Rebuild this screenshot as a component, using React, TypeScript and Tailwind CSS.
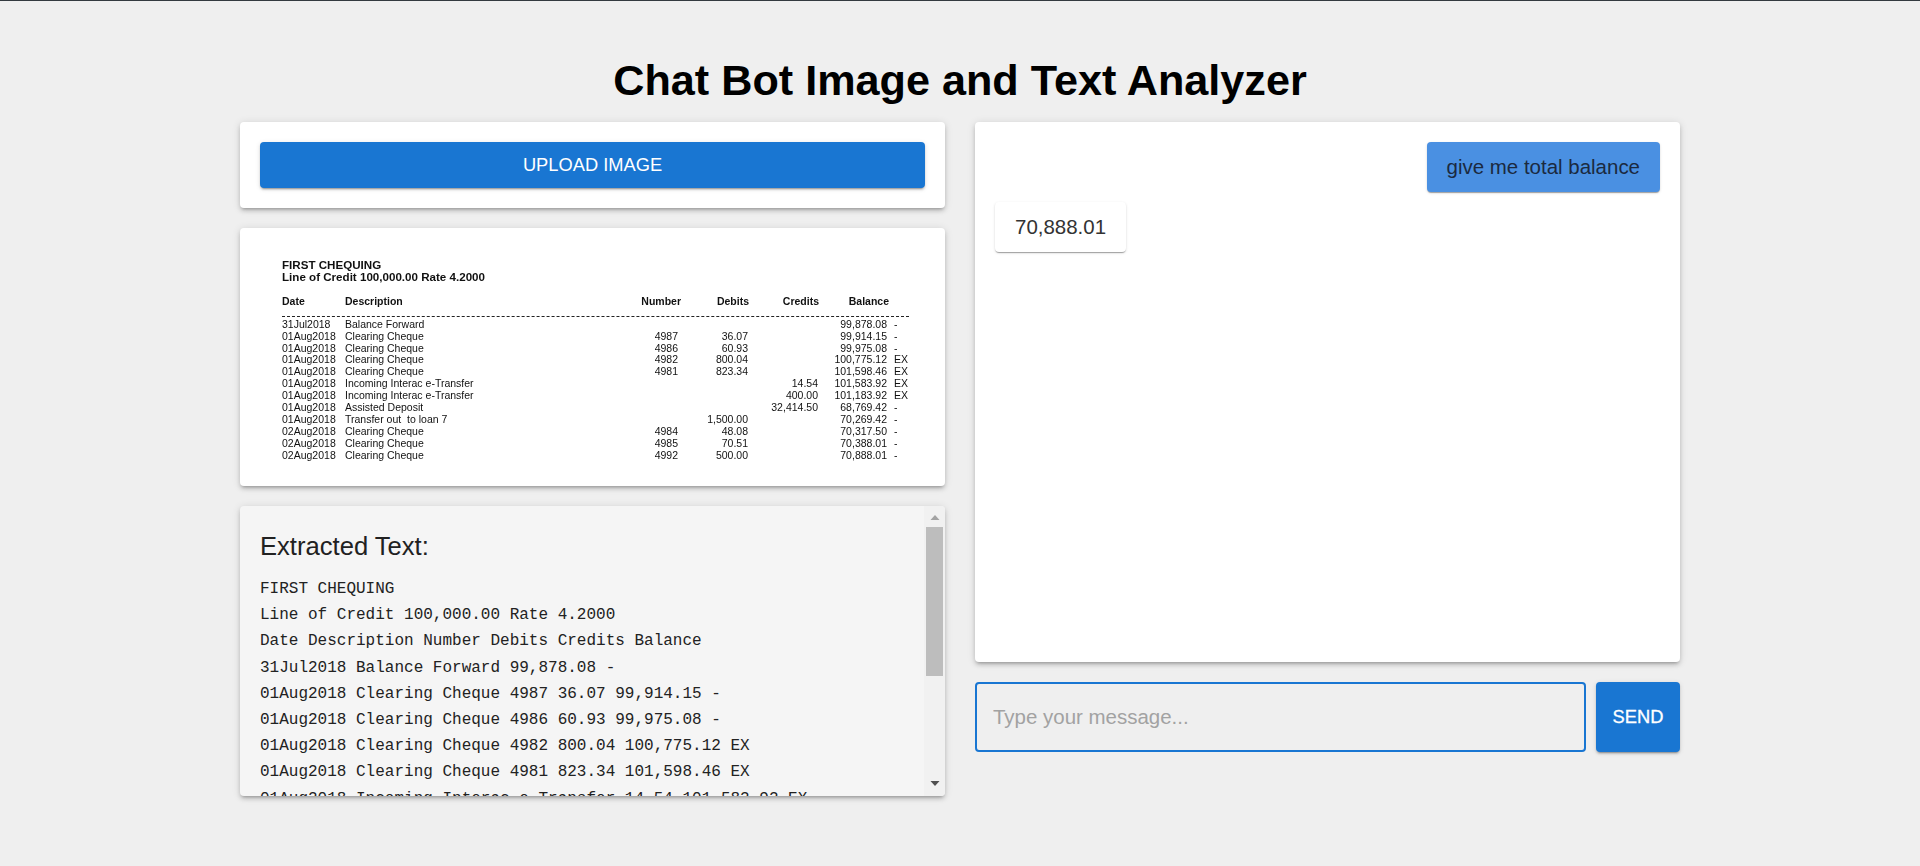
const statementRows = [
  ["31Jul2018", "Balance Forward", "", "", "", "99,878.08", "-"],
  ["01Aug2018", "Clearing Cheque", "4987", "36.07", "", "99,914.15", "-"],
  ["01Aug2018", "Clearing Cheque", "4986", "60.93", "", "99,975.08", "-"],
  ["01Aug2018", "Clearing Cheque", "4982", "800.04", "", "100,775.12", "EX"],
  ["01Aug2018", "Clearing Cheque", "4981", "823.34", "", "101,598.46", "EX"],
  ["01Aug2018", "Incoming Interac e-Transfer", "", "", "14.54", "101,583.92", "EX"],
  ["01Aug2018", "Incoming Interac e-Transfer", "", "", "400.00", "101,183.92", "EX"],
  ["01Aug2018", "Assisted Deposit", "", "", "32,414.50", "68,769.42", "-"],
  ["01Aug2018", "Transfer out  to loan 7", "", "1,500.00", "", "70,269.42", "-"],
  ["02Aug2018", "Clearing Cheque", "4984", "48.08", "", "70,317.50", "-"],
  ["02Aug2018", "Clearing Cheque", "4985", "70.51", "", "70,388.01", "-"],
  ["02Aug2018", "Clearing Cheque", "4992", "500.00", "", "70,888.01", "-"],
];

const extractedLines = [
  "FIRST CHEQUING",
  "Line of Credit 100,000.00 Rate 4.2000",
  "Date Description Number Debits Credits Balance",
  "31Jul2018 Balance Forward 99,878.08 -",
  "01Aug2018 Clearing Cheque 4987 36.07 99,914.15 -",
  "01Aug2018 Clearing Cheque 4986 60.93 99,975.08 -",
  "01Aug2018 Clearing Cheque 4982 800.04 100,775.12 EX",
  "01Aug2018 Clearing Cheque 4981 823.34 101,598.46 EX",
  "01Aug2018 Incoming Interac e-Transfer 14.54 101,583.92 EX",
];

const cardShadow =
  "shadow-[0px_3px_3px_-2px_rgba(0,0,0,0.2),0px_3px_4px_0px_rgba(0,0,0,0.14),0px_1px_8px_0px_rgba(0,0,0,0.12)]";
const rowGrid = "grid grid-cols-[63px_285px_51px_68px_70px_68px_22px]";

function StatementImage() {
  return (
    <div className="px-[42px] pt-[31px] text-[10.5px] leading-[11.9px] text-[#111] blur-[0.25px]">
      <div className="text-[11.6px] font-bold">FIRST CHEQUING</div>
      <div className="text-[11.6px] font-bold">Line of Credit 100,000.00 Rate 4.2000</div>
      <div className={`${rowGrid} mt-[13px] font-bold`}>
        <span>Date</span>
        <span>Description</span>
        <span className="text-right">Number</span>
        <span className="text-right">Debits</span>
        <span className="text-right">Credits</span>
        <span className="text-right -mr-[2px]">Balance</span>
      </div>
      <div className="mt-[8px] mb-[2px] border-t border-dashed border-[#222] w-[627px]" />
      {statementRows.map((row, i) => (
        <div key={i} className={rowGrid}>
          <span>{row[0]}</span>
          <span className="whitespace-pre">{row[1]}</span>
          <span className="text-right pr-[3px]">{row[2]}</span>
          <span className="text-right pr-[1px]">{row[3]}</span>
          <span className="text-right pr-[1px]">{row[4]}</span>
          <span className="text-right">{row[5]}</span>
          <span className="pl-[7px]">{row[6]}</span>
        </div>
      ))}
    </div>
  );
}

export default function App() {
  return (
    <div className="min-h-screen bg-[#efefef] border-t border-[#333a3f] font-['Liberation_Sans',Arial,sans-serif]">
      <h1 className="pt-[55px] pb-[18px] text-center text-[43.2px] leading-[48px] font-bold text-black">
        Chat Bot Image and Text Analyzer
      </h1>

      <div className="mx-auto grid w-[1440px] grid-cols-2 gap-[30px]">
        <div className="flex flex-col gap-[20px]">
          <div className={`rounded-[4px] bg-white p-[20px] ${cardShadow}`}>
            <button
              type="button"
              className="block h-[46px] w-full rounded-[4px] bg-[#1976d2] text-[18.3px] text-white shadow-[0px_3px_1px_-2px_rgba(0,0,0,0.2),0px_2px_2px_0px_rgba(0,0,0,0.14),0px_1px_5px_0px_rgba(0,0,0,0.12)]"
            >
              UPLOAD IMAGE
            </button>
          </div>

          <div className={`h-[258px] rounded-[4px] bg-white ${cardShadow}`}>
            <StatementImage />
          </div>

          <div className={`relative h-[290px] overflow-hidden rounded-[4px] bg-[#f5f5f5] ${cardShadow}`}>
            <div className="h-full overflow-hidden pl-[20px] pt-[24px] pr-[40px]">
              <h2 className="text-[25.6px] leading-[32px] text-[#212121]">Extracted Text:</h2>
              <div className="mt-[14px] font-['Liberation_Mono',monospace] text-[16px] leading-[26.2px] text-[#222] whitespace-pre">
                {extractedLines.map((line, i) => (
                  <div key={i}>{line}</div>
                ))}
              </div>
            </div>

            {/* fake scrollbar, same spot as the browser's */}
            <div className="absolute inset-y-0 right-0 flex w-[21px] flex-col items-center bg-[#f1f1f1]">
              <svg width="12" height="21" viewBox="0 0 12 21" className="shrink-0">
                <path d="M1.5 14 L6 9 L10.5 14 Z" fill="#a3a3a3" />
              </svg>
              <div className="h-[149px] w-[17px] shrink-0 bg-[#bdbdbd]" />
              <svg width="12" height="21" viewBox="0 0 12 21" className="mt-auto shrink-0">
                <path d="M1.5 6 L6 11 L10.5 6 Z" fill="#505050" />
              </svg>
            </div>
          </div>
        </div>

        <div className="flex flex-col gap-[20px]">
          <div className={`flex h-[540px] flex-col items-start gap-[10px] rounded-[4px] bg-white p-[20px] ${cardShadow}`}>
            <div className="self-end rounded-[4px] bg-[#4a90e2] px-[20px] text-[20.48px] leading-[50px] text-[#1b2a3f] shadow-[0px_2px_1px_-1px_rgba(0,0,0,0.2),0px_1px_1px_0px_rgba(0,0,0,0.14),0px_1px_3px_0px_rgba(0,0,0,0.12)]">
              give me total balance
            </div>
            <div className="rounded-[4px] bg-white px-[20px] text-[20.48px] leading-[50px] text-[#333] shadow-[0px_2px_1px_-1px_rgba(0,0,0,0.2),0px_1px_1px_0px_rgba(0,0,0,0.14),0px_1px_3px_0px_rgba(0,0,0,0.12)]">
              70,888.01
            </div>
          </div>

          <div className="flex h-[70px] gap-[10px]">
            <input
              type="text"
              placeholder="Type your message..."
              className="min-w-0 flex-1 rounded-[4px] border-2 border-[#1976d2] bg-transparent px-[16px] text-[20.48px] outline-none placeholder:text-[#a2a2a2]"
            />
            <button
              type="button"
              className="w-[84px] rounded-[4px] bg-[#1976d2] text-[18.3px] text-white [-webkit-text-stroke:0.3px_white] shadow-[0px_3px_1px_-2px_rgba(0,0,0,0.2),0px_2px_2px_0px_rgba(0,0,0,0.14),0px_1px_5px_0px_rgba(0,0,0,0.12)]"
            >
              SEND
            </button>
          </div>
        </div>
      </div>
    </div>
  );
}
